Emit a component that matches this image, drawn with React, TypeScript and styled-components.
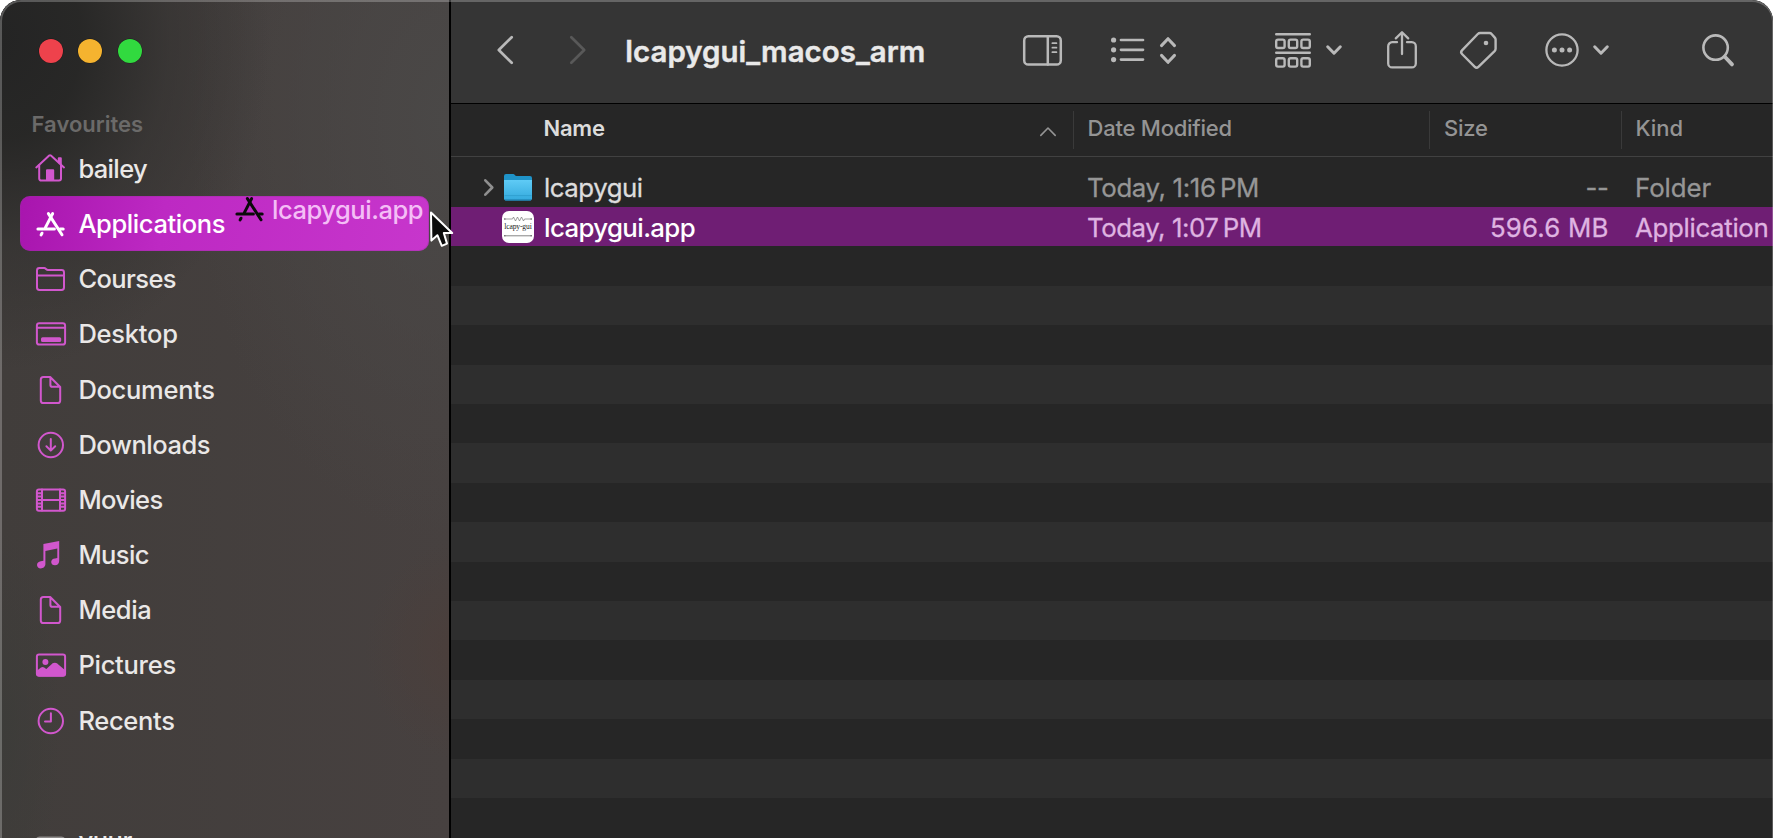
import React from 'react';
import styled, { createGlobalStyle, css } from 'styled-components';

const GlobalStyle = createGlobalStyle`
  *, *::before, *::after { box-sizing: border-box; }
  html, body { margin: 0; height: 100%; overflow: hidden; background: #fff; }
  body { font-family: Inter, 'Liberation Sans', sans-serif; -webkit-font-smoothing: antialiased; }
  svg { display: block; overflow: visible; flex: none; }
`;

const Window = styled.div`
  position: relative;
  display: flex;
  width: 1773px;
  height: 838px;
  overflow: hidden;
  border-radius: 21px 21px 0 0;
  background: #262626;
  &::after {
    content: '';
    position: absolute;
    inset: 0 0 -30px 0;
    border: solid rgba(255, 255, 255, 0.24);
    border-width: 2px 1px 0 2px;
    border-radius: 21px 21px 0 0;
    pointer-events: none;
  }
`;

const Sidebar = styled.aside`
  width: 451px;
  flex: none;
  padding: 39.4px 20px 0;
  border-right: 2px solid #000;
  background:
    radial-gradient(ellipse 270px 330px at 0 40px, #242424 0%, rgba(38, 38, 37, 0.93) 30%, rgba(48, 47, 46, 0.55) 62%, rgba(60, 58, 57, 0) 100%),
    radial-gradient(ellipse 95px 110px at 460px 650px, rgba(76, 62, 58, 0.8), rgba(76, 62, 58, 0)),
    radial-gradient(ellipse 60px 200px at 0 730px, rgba(60, 60, 57, 0.9), rgba(60, 60, 57, 0)),
    radial-gradient(ellipse 260px 420px at 449px 120px, #4a4847, rgba(74, 72, 71, 0)),
    linear-gradient(90deg, #413d3b, #474140);
`;

const TrafficLights = styled.div`
  display: flex;
  gap: 15.3px;
  padding-left: 19px;
`;

const Light = styled.span<{ $color: string }>`
  width: 24px;
  height: 24px;
  border-radius: 50%;
  background: ${(p) => p.$color};
  box-shadow: 0 0 0 0.5px rgba(0, 0, 0, 0.35);
`;

const SectionTitle = styled.h2`
  margin: 45.3px 0 0 11.6px;
  height: 32px;
  font-size: 22px;
  line-height: 31px;
  font-weight: 600;
  color: #6b6a69;
`;

const Items = styled.ul`
  margin: 0;
  padding: 0;
  list-style: none;
`;

const Item = styled.li<{ $selected?: boolean; $spaced?: boolean; $spacing: number }>`
  display: flex;
  align-items: center;
  gap: 12.4px;
  height: 55.2px;
  padding: 1px 0 0 16px;
  border-radius: 10px;
  font-size: 25.5px;
  font-weight: 500;
  color: #eae8e7;
  letter-spacing: ${(p) => p.$spacing}px;
  white-space: nowrap;
  ${(p) => p.$spaced && css`margin-top: 65.6px;`}
  ${(p) =>
    p.$selected &&
    css`
      color: #fff;
      background: linear-gradient(100deg, #a815ae 0%, #bd29c3 35%, #c736cc 100%);
      box-shadow: inset 0 0 0 1px rgba(150, 50, 155, 0.35);
    `}
`;

const ItemLabel = styled.span`
  margin-top: -1px;
`;

const Main = styled.main`
  flex: 1;
  min-width: 0;
  display: flex;
  flex-direction: column;
`;

const Toolbar = styled.header`
  display: flex;
  align-items: center;
  height: 104px;
  flex: none;
  padding-bottom: 3px;
  border-bottom: 1.5px solid #000;
  background: #353535;
  color: #b9b9b9;
`;

const Tool = styled.svg<{ $before: number }>`
  margin-left: ${(p) => p.$before}px;
  fill: none;
  stroke: currentColor;
  stroke-linecap: round;
  stroke-linejoin: round;
`;

const DimTool = styled(Tool)`
  color: #595959;
`;

const Title = styled.h1`
  width: 310px;
  margin: 1px 0 0 39.8px;
  font-size: 29.5px;
  font-weight: 600;
  line-height: 40px;
  letter-spacing: -0.01px;
  color: #e9e9e9;
  -webkit-text-stroke: 0.4px currentColor;
`;

const columns = css`
  display: grid;
  grid-template-columns: 621.5px 356.5px 191.5px 1fr;
  align-items: center;
`;

const HeaderRow = styled.div`
  ${columns}
  height: 53px;
  flex: none;
  border-bottom: 1.5px solid #414141;
  font-size: 22px;
  color: #949494;
`;

const HeaderCell = styled.div<{ $spacing: number; $strong?: boolean }>`
  display: flex;
  align-items: center;
  justify-content: space-between;
  height: 38px;
  padding: 0 16px 4px 14px;
  border-left: 1.5px solid #3a3a3a;
  font-weight: 500;
  letter-spacing: ${(p) => p.$spacing}px;
  ${(p) =>
    p.$strong &&
    css`
      padding-left: 92.5px;
      border-left: 0;
      font-weight: 600;
      color: #dcdcdc;
    `}
`;

const Rows = styled.div`
  flex: 1;
  padding-top: 10.6px;
  overflow: hidden;
`;

const Row = styled.div<{ $tone: 'dark' | 'light' | 'selected' }>`
  ${columns}
  height: 39.42px;
  font-size: 25.8px;
  white-space: nowrap;
  -webkit-text-stroke: 0.3px currentColor;
  color: ${(p) => (p.$tone === 'selected' ? '#dfb3e1' : '#969696')};
  background: ${(p) => ({ dark: '#262626', light: '#2e2e2e', selected: '#6f1e74' })[p.$tone]};
`;

const NameCell = styled.div<{ $selected?: boolean }>`
  display: flex;
  align-items: center;
  padding-left: 33px;
  letter-spacing: ${(p) => (p.$selected ? -0.62 : -0.46)}px;
  font-weight: ${(p) => (p.$selected ? 500 : 400)};
  color: ${(p) => (p.$selected ? '#fff' : '#dddddd')};
  ${(p) => p.$selected && css`-webkit-text-stroke: 0;`}
`;

const NameText = styled.span`
  padding-top: 1px;
`;

const IconSlot = styled.span`
  display: flex;
  justify-content: center;
  width: 32px;
  margin: 0 10px 0 8px;
`;

const DisclosureSlot = styled.span`
  width: 10px;
`;

const Cell = styled.div<{ $spacing: number; $right?: boolean }>`
  padding: ${(p) => (p.$right ? '1px 12px 0 0' : '1px 0 0 14.5px')};
  text-align: ${(p) => (p.$right ? 'right' : 'left')};
  letter-spacing: ${(p) => p.$spacing}px;
`;

const DragPreview = styled.div`
  position: absolute;
  left: 234.6px;
  top: 191px;
  display: flex;
  align-items: center;
  gap: 7.5px;
  height: 36px;
  font-size: 25.5px;
  font-weight: 500;
  letter-spacing: -0.48px;
  color: #f4bdf6;
`;

const Pointer = styled.svg`
  position: absolute;
  left: 428px;
  top: 208px;
  z-index: 1;
`;

const SidebarSvg = styled.svg`
  color: #d157cd;
  fill: none;
  stroke: currentColor;
  stroke-width: 2;
  stroke-linecap: round;
  stroke-linejoin: round;
`;

const Glyph = ({ children }: { children: React.ReactNode }) => (
  <SidebarSvg width="30" height="30" viewBox="0 0 30 30">
    {children}
  </SidebarSvg>
);

const AppStoreShape = ({ tint }: { tint: string }) => (
  <g stroke={tint} strokeWidth="3">
    <path d="M16.6 4.6 9.4 18.6" />
    <path d="M12.4 4.6 26 25.8" />
    <path d="M1.9 20H18.4M24 20h3.2" />
    <path d="M6 24.2 5.1 25.9" />
  </g>
);

const DocShape = () => (
  <path d="M7.4 2h6.8l10 10v13.4a2.6 2.6 0 0 1-2.6 2.6H7.400a2.6 2.6 0 0 1-2.6-2.6V4.6A2.6 2.6 0 0 1 7.4 2ZM14.4 2.3v7.6a1.8 1.8 0 0 0 1.8 1.8h7.6" />
);

const icons: Record<string, React.ReactNode> = {
  home: (
    <g>
      <path d="M.3 13.4 13.2 1.6a1.3 1.3 0 0 1 1.7 0L28 13.4" />
      <path d="M3.2 11v13.6a2 2 0 0 0 2 2H23a2 2 0 0 0 2-2V11" />
      <path d="M22.8 8.4V4.2h2v6" />
      <path d="M11 26V16.2h6.2V26Z" fill="currentColor" />
    </g>
  ),
  apps: <AppStoreShape tint="#fff" />,
  folder: (
    <path d="M1 23.6V6.4A2.4 2.4 0 0 1 3.4 4h4.8c1.6 0 2 2 3.8 2h13.6A2.4 2.4 0 0 1 28 8.4v15.2a2.4 2.4 0 0 1-2.4 2.4H3.4A2.4 2.4 0 0 1 1 23.6ZM1.2 11.4h26.6" />
  ),
  desktop: (
    <g>
      <rect x=".9" y="4.2" width="28.2" height="21.4" rx="2.4" />
      <path d="M1.2 8.7h27.6" />
      <rect x="6" y="19.2" width="18.2" height="2.8" rx=".6" fill="currentColor" />
    </g>
  ),
  doc: <DocShape />,
  download: (
    <g>
      <circle cx="14.8" cy="15" r="12.2" />
      <path d="M14.8 9v11.4M10.4 16.2l4.4 4.4 4.4-4.4" />
    </g>
  ),
  movie: (
    <g>
      <rect x=".9" y="4.4" width="28.2" height="21.4" rx="2" />
      <path d="M6 4.6v21M24 4.6v21M6 15h18M1.2 8.2H6M1.2 11.6H6M1.2 15H6M1.2 18.4H6M1.2 21.8H6M24 8.2h5M24 11.6h5M24 15h5M24 18.4h5M24 21.8h5" />
    </g>
  ),
  music: (
    <g fill="currentColor" stroke="none">
      <path d="M7.4 4.1 23.2.9v20.2c0 2.8-2 4.2-4.2 4.2-2.3 0-3.8-1.3-3.8-3.3 0-2.2 1.6-3.4 3.8-3.6l2.3-.4V8.5L9.400 11v13c0 2.6-2.2 4.4-4.6 4.4-2.2 0-3.8-1.4-3.8-3.4 0-2.2 1.6-3.4 3.8-3.7l2.6-.5Z" />
    </g>
  ),
  picture: (
    <g>
      <rect x=".9" y="4.4" width="28.2" height="21.4" rx="2.2" />
      <path d="M1.4 21.6 5.6 18.4q1-.7 2 0l2.6 2 6.6-6q2-1.5 4 0l8 6.8v2.4a1.8 1.8 0 0 1-1.8 1.8H3.200a1.8 1.8 0 0 1-1.8-1.8Z" fill="currentColor" />
      <circle cx="9.4" cy="12" r="2" fill="currentColor" />
    </g>
  ),
  clock: (
    <g>
      <circle cx="14.8" cy="15" r="12.2" />
      <path d="M14.9 7.2v8.4H9" />
    </g>
  ),
  disk: <rect x="1" y="11.4" width="27" height="15" rx="2.5" stroke="#8e8b8a" />,
};

const places: { icon: string; label: string; spacing: number }[] = [
  { icon: 'home', label: 'bailey', spacing: -0.65 },
  { icon: 'apps', label: 'Applications', spacing: -0.4 },
  { icon: 'folder', label: 'Courses', spacing: -0.6 },
  { icon: 'desktop', label: 'Desktop', spacing: -0.24 },
  { icon: 'doc', label: 'Documents', spacing: -0.29 },
  { icon: 'download', label: 'Downloads', spacing: -0.48 },
  { icon: 'movie', label: 'Movies', spacing: -0.64 },
  { icon: 'music', label: 'Music', spacing: -0.6 },
  { icon: 'doc', label: 'Media', spacing: -0.42 },
  { icon: 'picture', label: 'Pictures', spacing: -0.27 },
  { icon: 'clock', label: 'Recents', spacing: -0.3 },
  { icon: 'disk', label: 'yuur', spacing: -0.4 },
];

const FolderIcon = () => (
  <svg width="28" height="28" viewBox="0 0 28 28">
    <defs>
      <linearGradient id="folderFront" x1="0" y1="0" x2="0" y2="1">
        <stop offset="0" stopColor="#5fcbf6" />
        <stop offset="1" stopColor="#33a9dc" />
      </linearGradient>
    </defs>
    <path d="M0 3A2 2 0 0 1 2 1h7.2c1.4 0 1.8 2 3.4 2H26a2 2 0 0 1 2 2v6H0Z" fill="#1f93c8" />
    <path d="M0 7h28v18.6a2 2 0 0 1-2 2H2a2 2 0 0 1-2-2Z" fill="url(#folderFront)" />
    <path d="M.5 22.6h27" stroke="#2d9ccd" strokeWidth=".8" />
    <path d="M1 27h26" stroke="#1d7fae" strokeWidth="1.2" />
  </svg>
);

const AppIconText = styled.text`
  font: 400 7.6px 'Liberation Serif', serif;
  letter-spacing: 0;
  fill: #222;
`;

const LcapyIcon = () => (
  <svg width="32" height="32" viewBox="0 0 32 32">
    <rect width="32" height="32" rx="7" fill="#fff" />
    <path d="M2.5 8h8l1-2 2 4 2-4 2 4 2-4 2 4 1-2h7" fill="none" stroke="#777" strokeWidth=".7" />
    <path d="M2.5 24.8h27" stroke="#777" strokeWidth=".9" />
    <g fill="#666">
      <circle cx="2.8" cy="8" r=".8" />
      <circle cx="29.2" cy="8" r=".8" />
      <circle cx="2.8" cy="24.8" r=".8" />
      <circle cx="29.2" cy="24.8" r=".8" />
    </g>
    <AppIconText x="16" y="18.2" textAnchor="middle" textLength="27.5">
      lcapy-gui
    </AppIconText>
  </svg>
);

const SmallChevron = ({ before }: { before: number }) => (
  <Tool $before={before} width="16" height="10" viewBox="0 0 16 10" strokeWidth="3">
    <path d="m1.700 1.800 6.300 6.400 6.300-6.400" />
  </Tool>
);

const FinderToolbar = () => (
  <Toolbar>
    <Tool $before={46} width="16" height="28" viewBox="0 0 16 28" strokeWidth="2.7">
      <path d="M14.7 1.3 1.8 14l12.9 12.7" />
    </Tool>
    <DimTool $before={56.5} width="16" height="28" viewBox="0 0 16 28" strokeWidth="2.7">
      <path d="M1.3 1.3 14.2 14 1.3 26.7" />
    </DimTool>
    <Title>lcapygui_macos_arm</Title>
    <Tool $before={88} width="39" height="31" viewBox="0 0 39 31" strokeWidth="2.5">
      <rect x="1.2" y="1.2" width="36.6" height="28.4" rx="4.2" />
      <path d="M24.8 1.4v28" />
      <path d="M29.400 8.200h4M29.400 12.700h4M29.400 17.200h4" strokeWidth="1.800" />
    </Tool>
    <Tool $before={49} width="33" height="26" viewBox="0 0 33 26" strokeWidth="2.7">
      <path d="M10 3h22M10 12.8h22M10 22.6h22" />
      <g fill="currentColor" stroke="none">
        <circle cx="2.6" cy="3" r="2.6" />
        <circle cx="2.6" cy="12.8" r="2.6" />
        <circle cx="2.6" cy="22.6" r="2.6" />
      </g>
    </Tool>
    <Tool $before={16} width="16" height="27" viewBox="0 0 16 27" strokeWidth="3">
      <path d="M1.5 8.6 8 1.7l6.5 6.9M1.5 18.4 8 25.3l6.5-6.9" />
    </Tool>
    <Tool $before={98.5} width="36" height="35" viewBox="0 0 36 35" strokeWidth="2.4">
      <path d="M1.200 1.300h33.600M1.200 19.800h33.600" />
      {[6.6, 25.2].map((y) =>
        [1.2, 13.8, 26.4].map((x) => <rect key={`${x}-${y}`} x={x} y={y} width="8.4" height="8.4" rx="1.800" />),
      )}
    </Tool>
    <SmallChevron before={15} />
    <Tool $before={45} width="30" height="38" viewBox="0 0 30 38" strokeWidth="2.3">
      <path d="M10 11.2H5.200a4 4 0 0 0-4 4v17.200a4 4 0 0 0 4 4h19.600a4 4 0 0 0 4-4V15.200a4 4 0 0 0-4-4H20" />
      <path d="M15 23V1.600M8.800 7.400 15 1.200l6.200 6.200" />
    </Tool>
    <Tool $before={43.5} width="37" height="38" viewBox="0 0 37 38" strokeWidth="2.4">
      <path d="M20.200 2h9.200a3 3 0 0 1 2.200 1l3.200 3.600a3 3 0 0 1 .8 2v9.200a3.500 3.500 0 0 1-1 2.400L18.400 35.800a2.600 2.600 0 0 1-3.600 0L2 23a2.600 2.600 0 0 1 0-3.600L17.800 3a3.400 3.400 0 0 1 2.400-1Z" />
      <circle cx="26" cy="12" r="2.300" fill="currentColor" stroke="none" />
    </Tool>
    <Tool $before={47.5} width="34" height="34" viewBox="0 0 34 34" strokeWidth="2.3">
      <circle cx="17" cy="17" r="15.600" />
      <g fill="currentColor" stroke="none">
        <circle cx="9.400" cy="17" r="2.500" />
        <circle cx="17" cy="17" r="2.500" />
        <circle cx="24.600" cy="17" r="2.500" />
      </g>
    </Tool>
    <SmallChevron before={14.5} />
    <Tool $before={93} width="32" height="33" viewBox="0 0 32 33" strokeWidth="2.6">
      <circle cx="13.600" cy="13.600" r="12.200" />
      <path d="M22.800 22.800 30 30.400" strokeWidth="3.800" />
    </Tool>
  </Toolbar>
);

const SortArrow = styled.svg`
  margin: 6px 1px 0 0;
  fill: none;
  stroke: #949494;
  stroke-width: 1.6;
  stroke-linecap: round;
  stroke-linejoin: round;
`;

const FileList = () => (
  <>
    <HeaderRow>
      <HeaderCell $strong $spacing={-0.25}>
        Name
        <SortArrow width="16" height="9" viewBox="0 0 16 9">
          <path d="M.8 8.400 8 1l7.200 7.400" />
        </SortArrow>
      </HeaderCell>
      <HeaderCell $spacing={-0.23}>Date Modified</HeaderCell>
      <HeaderCell $spacing={-0.23}>Size</HeaderCell>
      <HeaderCell $spacing={-0.06}>Kind</HeaderCell>
    </HeaderRow>
    <Rows>
      <Row $tone="dark">
        <NameCell>
          <DisclosureSlot>
            <svg width="10" height="17" viewBox="0 0 10 17">
              <path d="m1.300 1.300 7 7.200-7 7.200" fill="none" stroke="#8f8f8f" strokeWidth="2.600" strokeLinecap="round" strokeLinejoin="round" />
            </svg>
          </DisclosureSlot>
          <IconSlot>
            <FolderIcon />
          </IconSlot>
          <NameText>lcapygui</NameText>
        </NameCell>
        <Cell $spacing={-0.35}>Today, 1:16&#8201;PM</Cell>
        <Cell $right $spacing={-0.4}>--</Cell>
        <Cell $spacing={-0.06}>Folder</Cell>
      </Row>
      <Row $tone="selected">
        <NameCell $selected>
          <DisclosureSlot />
          <IconSlot>
            <LcapyIcon />
          </IconSlot>
          <NameText>lcapygui.app</NameText>
        </NameCell>
        <Cell $spacing={-0.45}>Today, 1:07&#8201;PM</Cell>
        <Cell $right $spacing={0.2}>596.6 MB</Cell>
        <Cell $spacing={-0.3}>Application</Cell>
      </Row>
      {Array.from({ length: 15 }, (_, i) => (
        <Row key={i} $tone={i % 2 ? 'light' : 'dark'} />
      ))}
    </Rows>
  </>
);

export default function App() {
  return (
    <>
      <GlobalStyle />
      <Window>
        <Sidebar>
          <TrafficLights>
            <Light $color="#ee424c" />
            <Light $color="#f5b32f" />
            <Light $color="#31da3f" />
          </TrafficLights>
          <SectionTitle>Favourites</SectionTitle>
          <Items>
            {places.map(({ icon, label, spacing }) => (
              <Item key={label} $selected={icon === 'apps'} $spaced={icon === 'disk'} $spacing={spacing}>
                <Glyph>{icons[icon]}</Glyph>
                <ItemLabel>{label}</ItemLabel>
              </Item>
            ))}
          </Items>
        </Sidebar>
        <Main>
          <FinderToolbar />
          <FileList />
        </Main>
        <DragPreview>
          <Glyph>
            <AppStoreShape tint="#0a0a0a" />
          </Glyph>
          lcapygui.app
        </DragPreview>
        <Pointer width="28" height="42" viewBox="0 0 28 42">
          <path d="M3 4.500 24.200 25H15.800L19 35.600 13.800 37.800 9.400 27.200 3.400 32.600Z" fill="#0b0b0b" stroke="#fff" strokeWidth="2" strokeLinejoin="round" />
        </Pointer>
      </Window>
    </>
  );
}
